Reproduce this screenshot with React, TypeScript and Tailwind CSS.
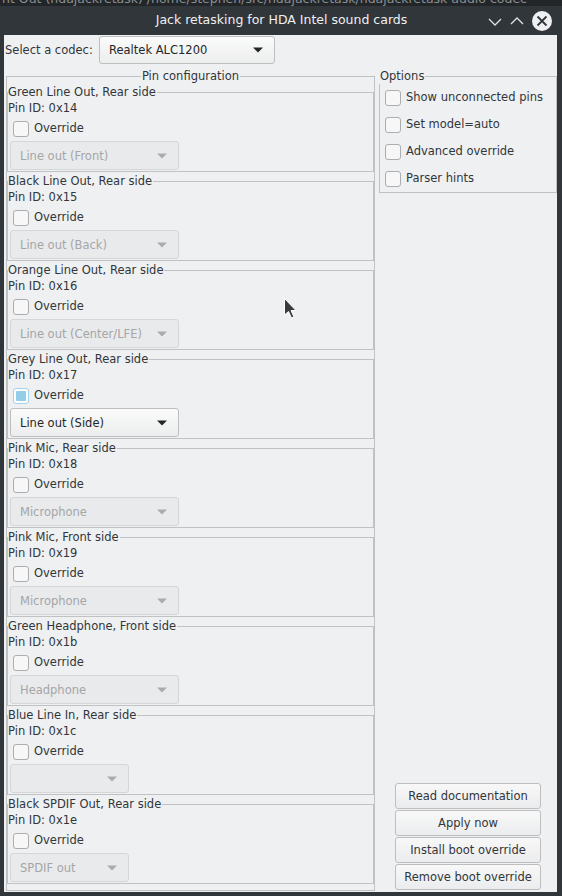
import { ReactNode } from "react";

type Pin = {
  name: string;
  id: string;
  value: string;
  checked?: boolean;
  narrow?: boolean;
};

const pins: Pin[] = [
  { name: "Green Line Out, Rear side", id: "0x14", value: "Line out (Front)" },
  { name: "Black Line Out, Rear side", id: "0x15", value: "Line out (Back)" },
  { name: "Orange Line Out, Rear side", id: "0x16", value: "Line out (Center/LFE)" },
  { name: "Grey Line Out, Rear side", id: "0x17", value: "Line out (Side)", checked: true },
  { name: "Pink Mic, Rear side", id: "0x18", value: "Microphone" },
  { name: "Pink Mic, Front side", id: "0x19", value: "Microphone" },
  { name: "Green Headphone, Front side", id: "0x1b", value: "Headphone" },
  { name: "Blue Line In, Rear side", id: "0x1c", value: "", narrow: true },
  { name: "Black SPDIF Out, Rear side", id: "0x1e", value: "SPDIF out", narrow: true },
];

const options = ["Show unconnected pins", "Set model=auto", "Advanced override", "Parser hints"];
const actions = ["Read documentation", "Apply now", "Install boot override", "Remove boot override"];

function Arrow({ dim }: { dim?: boolean }) {
  return (
    <svg width="10" height="6" viewBox="0 0 10 6" className="shrink-0">
      <path d="M0 0.5 L10 0.5 L5 5.5 Z" fill={dim ? "#a9abad" : "#232629"} />
    </svg>
  );
}

function Checkbox({ checked }: { checked?: boolean }) {
  if (checked) {
    return (
      <span className="w-[16px] h-[16px] rounded-[3px] border border-[#a3d3ec] bg-[#fcfcfc] p-[2px] shrink-0">
        <span className="block w-full h-full rounded-[1px] bg-[#93cee9]" />
      </span>
    );
  }
  return <span className="w-[16px] h-[16px] rounded-[3px] border border-[#abadaf] bg-[#f7f7f7] shrink-0" />;
}

function Combo({ value, enabled, width, height }: { value: string; enabled?: boolean; width: string; height: string }) {
  return (
    <div
      className={`${width} ${height} rounded-[3px] border flex items-center justify-between pl-[9px] pr-[11px] ${
        enabled
          ? "border-[#bcbebf] bg-gradient-to-b from-[#fbfbfb] to-[#eceded] text-[#232629]"
          : "border-[#d5d6d7] bg-[#e9eaeb] text-[#a4a6a8]"
      }`}
    >
      <span className="pt-[2px]">{value}</span>
      <Arrow dim={!enabled} />
    </div>
  );
}

function PinGroup({ pin }: { pin: Pin }) {
  return (
    <fieldset className="border border-[#bfc1c3] mb-[2px] pb-[1px]">
      <legend className="leading-[15px] pr-[1px]">{pin.name}</legend>
      <div className="mt-[1px] leading-[14px]">Pin ID: {pin.id}</div>
      <div className="mt-[6px] ml-[5px] flex items-center gap-[5px] h-[16px]">
        <Checkbox checked={pin.checked} />
        <span>Override</span>
      </div>
      <div className="mt-[4px] ml-[2px]">
        <Combo
          value={pin.value}
          enabled={pin.checked}
          width={pin.narrow ? "w-[119px]" : "w-[169px]"}
          height="h-[29px]"
        />
      </div>
    </fieldset>
  );
}

function Frame({ title, center, className, children }: { title: string; center?: boolean; className: string; children: ReactNode }) {
  return (
    <fieldset className={`border border-[#bfc1c3] ${className}`}>
      <legend className={`leading-[16px] px-[1px] ${center ? "mx-auto" : "-ml-[1px]"}`}>{title}</legend>
      {children}
    </fieldset>
  );
}

export default function App() {
  return (
    <div className="w-[562px] h-[896px] overflow-hidden bg-[#31363b] flex flex-col font-['DejaVu_Sans',sans-serif] text-[11.5px] text-[#31363b] relative">
      {/* window behind */}
      <div className="h-[6px] shrink-0 bg-[#232629] overflow-hidden">
        <div className="-mt-[8px] pl-[2px] text-[12.5px] leading-[14px] text-[#8a9093] whitespace-nowrap">
          nt Out (hdajackretask) /home/stephen/src/hdajackretask/hdajackretask audio codec
        </div>
      </div>

      {/* title bar */}
      <div className="h-[29px] shrink-0 flex items-center relative">
        <div className="flex-1 text-center text-[12.5px] text-[#eff0f1] pl-[1px]">Jack retasking for HDA Intel sound cards</div>
        <div className="absolute right-[9px] top-[4px] flex items-center gap-[6px]">
          <svg width="16" height="20" viewBox="0 0 16 20">
            <path d="M2 8 L8 14 L14 8" stroke="#dfe1e2" strokeWidth="1.3" fill="none" />
          </svg>
          <svg width="16" height="20" viewBox="0 0 16 20">
            <path d="M2 13 L8 7 L14 13" stroke="#dfe1e2" strokeWidth="1.3" fill="none" />
          </svg>
          <svg width="22" height="22" viewBox="0 0 22 22">
            <circle cx="11" cy="11" r="10" fill="#eff0f1" />
            <path d="M6.5 6.5 L15.5 15.5 M15.5 6.5 L6.5 15.5" stroke="#31363b" strokeWidth="1.8" />
          </svg>
        </div>
      </div>

      {/* window content */}
      <div className="ml-[4px] mr-[5px] h-[857px] bg-[#eff0f1] flex flex-col">
        <div className="mt-[1px] flex items-center pl-[1px]">
          <span className="w-[94px] pt-[1px]">Select a codec:</span>
          <Combo value="Realtek ALC1200" enabled width="w-[176px]" height="h-[28px]" />
        </div>

        <div className="mt-[4px] flex-1 flex pl-[2px] pb-[1px] gap-[4px] min-h-0">
          <Frame title="Pin configuration" center className="w-[369px] pb-[7px]">
            <div className="flex flex-col pt-[1px]">
              {pins.map((p) => (
                <PinGroup key={p.id} pin={p} />
              ))}
            </div>
          </Frame>

          <div className="w-[178px] flex flex-col">
            <Frame title="Options" className="pb-[5px]">
              <div className="flex flex-col gap-[11px] mt-[6px] pl-[5px]">
                {options.map((o) => (
                  <div key={o} className="flex items-center gap-[5px] h-[16px]">
                    <Checkbox />
                    <span>{o}</span>
                  </div>
                ))}
              </div>
            </Frame>

            <div className="mt-auto mb-[1px] ml-[16px] flex flex-col gap-[1px]">
              {actions.map((a) => (
                <button
                  key={a}
                  className="w-[146px] h-[26px] pt-[2px] rounded-[3px] border border-[#bcbebf] bg-gradient-to-b from-[#f8f8f8] to-[#ebeced] text-[#31363b] text-center"
                >
                  {a}
                </button>
              ))}
            </div>
          </div>
        </div>
      </div>

      {/* mouse pointer */}
      <svg className="absolute left-[283px] top-[297px]" width="16" height="24" viewBox="0 0 16 24">
        <path d="M1.5 1.5 L1.5 18 L5.5 14.5 L8.5 21 L11 20 L8 13.5 L13 13.5 Z" fill="#3b3b3b" stroke="#ffffff" strokeWidth="1" />
      </svg>
    </div>
  );
}
